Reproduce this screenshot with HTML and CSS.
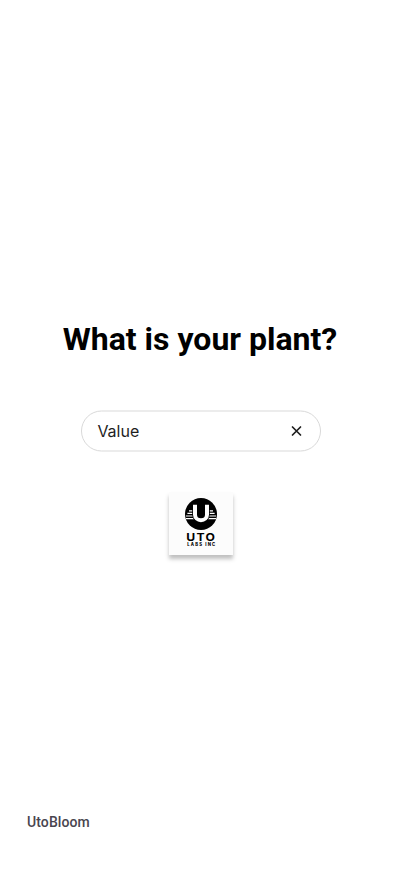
FILE: index.html
```html
<!DOCTYPE html>
<html lang="en">
<head>
<meta charset="utf-8">
<title>UtoBloom</title>
<link rel="stylesheet" href="styles.css">
</head>
<body>
<main class="screen">
  <h1 class="title">What is your plant?</h1>
  <div class="field">
    <svg class="outline" viewBox="0 0 240 42"><rect x=".5" y="1" width="239" height="40" rx="20"/></svg>
    <span class="value">Value</span>
    <svg class="clear" viewBox="0 0 16 16"><path d="M12.5 4l-8 8M4.5 4l8 8"/></svg>
  </div>
  <div class="logo">
    <svg viewBox="0 0 64 64">
      <circle cx="32" cy="22" r="16" fill="#000"/>
      <g stroke="#fff" stroke-width="1.2">
        <path d="M20 18.8H44M18.4 21.4H45.6M17 24H47M17 26.6H47"/>
      </g>
      <path d="M23.2 12v10.5a8.8 8.8 0 0 0 17.6 0V12z" fill="#000"/>
      <path d="M26 12.8v9.9a6 5.5 0 0 0 12 0v-9.9" fill="none" stroke="#fff" stroke-width="4"/>
      <text class="brand" transform="translate(17.3 48.6) scale(1.15 1)">UTO</text>
      <text class="sub" x="18.2" y="54.2" textLength="28" lengthAdjust="spacing">LABS INC</text>
    </svg>
  </div>
  <footer class="footer">UtoBloom</footer>
</main>
</body>
</html>
```
FILE: styles.css
```css
* { box-sizing: border-box; }
body { margin: 0; background: #fff; font-family: Roboto, sans-serif; }
.screen {
  width: 402px;
  height: 874px;
  display: flex;
  flex-direction: column;
  align-items: center;
  padding: 319px 0 42px;
}
.title {
  margin: 0;
  padding-right: 2px;
  font-size: 32px;
  line-height: 40px;
  font-weight: 700;
  white-space: nowrap;
  color: #000;
}
.field {
  position: relative;
  width: 240px;
  height: 42px;
  margin-top: 51px;
  padding: 0 17px 0 16.4px;
  display: flex;
  align-items: center;
  justify-content: space-between;
}
.outline {
  position: absolute;
  inset: 0;
  width: 240px;
  height: 42px;
  fill: none;
  stroke: #d9d9d9;
}
.value { font-family: Inter, sans-serif; font-size: 16px; line-height: 16px; color: #1e1e1e; }
.clear { width: 16px; height: 16px; fill: none; stroke: #1e1e1e; stroke-width: 1.7; stroke-linecap: round; stroke-linejoin: round; }
.logo {
  width: 64px;
  height: 63px;
  margin-top: 40px;
  background: #fcfcfc;
  box-shadow: 0 4px 4px rgba(0, 0, 0, 0.25);
}
.logo svg { display: block; width: 64px; height: 64px; }
.brand { font: 700 10.6px Inter, sans-serif; letter-spacing: 1.1px; }
.sub { font: 800 4.2px Inter, sans-serif; }
.footer {
  margin-top: auto;
  align-self: flex-start;
  padding-left: 27px;
  font-size: 14px;
  line-height: 20px;
  font-weight: 500;
  letter-spacing: 0.1px;
  color: #49454f;
}
```
